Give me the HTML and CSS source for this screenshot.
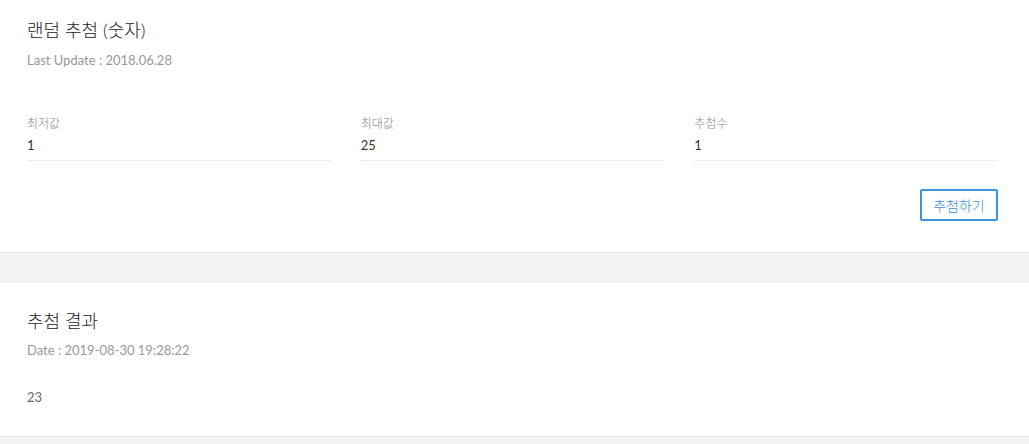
FILE: index.html
```html
<!DOCTYPE html>
<html lang="ko">
<head>
    <meta charset="UTF-8">
    <meta name="viewport" content="width=device-width, initial-scale=1.0">
    <title>랜덤 추첨 (숫자)</title>
    <link rel="stylesheet" href="styles.css">
</head>
<body>
    <div class="card draw-card">
        <h2 class="card-title">랜덤 추첨 (숫자)</h2>
        <div class="card-sub">Last Update : 2018.06.28</div>

        <div class="field-row">
            <div class="field">
                <label for="minValue">최저값</label>
                <input type="text" id="minValue" value="1" />
            </div>
            <div class="field">
                <label for="maxValue">최대값</label>
                <input type="text" id="maxValue" value="25" />
            </div>
            <div class="field">
                <label for="drawCount">추첨수</label>
                <input type="text" id="drawCount" value="1" />
            </div>
        </div>

        <div class="button-row">
            <button class="draw-button">추첨하기</button>
        </div>
    </div>

    <div class="card result-card">
        <h2 class="card-title">추첨 결과</h2>
        <div class="card-sub">Date : 2019-08-30 19:28:22</div>
        <div class="result">23</div>
    </div>
</body>
</html>
```

FILE: styles.css
```css
body {
    background-color: #f2f2f2;
    color: #333;
    font-family: Lato, "Noto Sans CJK KR", sans-serif;
    margin: 0;
    padding: 0;
}

.card {
    background-color: #fff;
    border-bottom: 1px solid #e3e3e3;
    padding: 18px 31px 31px 27px;
}

.result-card {
    margin-top: 30px;
    padding-top: 26px;
    padding-bottom: 29px;
}

.card-title {
    margin: 0;
    font-size: 18px;
    font-weight: 300;
    line-height: 24px;
    color: #222;
}

.card-sub {
    margin-top: 8px;
    font-size: 13px;
    line-height: 20px;
    color: #999;
}

.result-card .card-sub {
    margin-top: 7px;
}

.field-row {
    display: flex;
    gap: 30px;
    margin-top: 45px;
}

.field {
    flex: 1;
    border-bottom: 1px solid #ececec;
    padding-bottom: 5px;
}

.field label {
    display: block;
    font-size: 12px;
    font-weight: 300;
    line-height: 18px;
    color: #888;
}

.field input {
    display: block;
    width: 100%;
    border: none;
    padding: 0;
    margin-top: 2px;
    font-family: inherit;
    font-size: 13px;
    line-height: 20px;
    height: 20px;
    color: #333;
    background: none;
}

.field input:focus {
    outline: none;
}

.button-row {
    display: flex;
    justify-content: flex-end;
    margin-top: 28px;
}

.draw-button {
    background-color: #fff;
    color: #3a8fd6;
    border: 2px solid #3a95dc;
    border-radius: 2px;
    width: 78px;
    height: 32px;
    padding: 0;
    font-family: inherit;
    font-size: 14px;
    font-weight: 300;
    cursor: pointer;
}

.result {
    margin-top: 27px;
    font-size: 13px;
    line-height: 20px;
    color: #666;
}
```
